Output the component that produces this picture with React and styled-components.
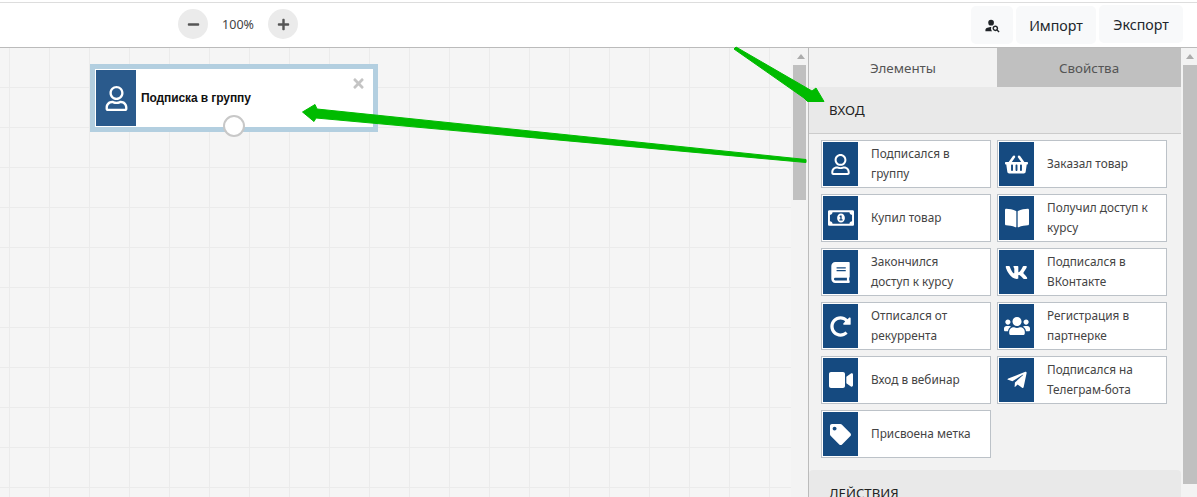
import styled, { createGlobalStyle } from "styled-components";
import {
  FaRegUser,
  FaShoppingBasket,
  FaRegMoneyBillAlt,
  FaBookOpen,
  FaBook,
  FaVk,
  FaRedoAlt,
  FaUsers,
  FaVideo,
  FaTelegramPlane,
  FaTag,
  FaMinus,
  FaPlus,
  FaTimes,
} from "react-icons/fa";
import { MdPersonSearch } from "react-icons/md";

const GlobalStyle = createGlobalStyle`
  html, body {
    margin: 0;
    padding: 0;
    height: 100%;
    overflow: hidden;
    background: #fff;
  }
  * { box-sizing: border-box; }
`;

const Page = styled.div`
  position: relative;
  width: 1197px;
  height: 497px;
  overflow: hidden;
  display: flex;
  flex-direction: column;
  padding-top: 2px;
  font-family: "Noto Sans", "Open Sans", sans-serif;
`;

const Toolbar = styled.header`
  height: 46px;
  flex: none;
  border-top: 1px solid #ddd;
  border-bottom: 1px solid #bbb;
  background: #fff;
  display: flex;
  align-items: flex-start;
  padding: 2px 14px 0 178px;
`;

const Zoom = styled.div`
  display: flex;
  align-items: center;
  margin-top: 4px;
`;

const ZoomButton = styled.div`
  width: 30px;
  height: 30px;
  border-radius: 50%;
  background: #ebebeb;
  color: #555;
  display: flex;
  align-items: center;
  justify-content: center;
  font-size: 13px;
`;

const ZoomValue = styled.span`
  width: 60px;
  text-align: center;
  font-size: 12.5px;
  color: #444;
`;

const Actions = styled.div`
  margin-left: auto;
  display: flex;
  gap: 3px;
`;

const ActionButton = styled.div`
  height: 38px;
  width: ${(p) => p.$width}px;
  margin-top: ${(p) => p.$top || 0}px;
  background: #f8f9fa;
  border-radius: 5px;
  color: #212529;
  font-size: 14.2px;
  display: flex;
  align-items: center;
  justify-content: center;
`;

const Main = styled.main`
  flex: 1;
  min-height: 0;
  display: flex;
`;

const Canvas = styled.section`
  width: 791px;
  flex: none;
  padding: 16px 0 0 90px;
  background-color: #f5f5f5;
  background-image:
    linear-gradient(to right, #ebebeb 1px, transparent 1px),
    linear-gradient(to bottom, #ebebeb 1px, transparent 1px);
  background-size: 40px 40px;
  background-position: 9px 39px;
`;

const Node = styled.div`
  position: relative;
  width: 288px;
  height: 68px;
  border: 5px solid #b3cfe0;
  background: #fff;
  padding: 1px;
  display: flex;
  align-items: center;
`;

const NodeIcon = styled.div`
  width: 40px;
  height: 100%;
  background: #2a5a8c;
  color: #fff;
  display: flex;
  align-items: center;
  justify-content: center;
  font-size: 25px;
`;

const NodeTitle = styled.span`
  margin-left: 5px;
  font-family: "Liberation Sans", Arial, sans-serif;
  font-weight: 700;
  font-size: 12px;
  letter-spacing: -0.1px;
  color: #111;
`;

const NodeClose = styled.div`
  position: absolute;
  top: 7px;
  right: 7px;
  color: #c4c4c4;
  font-size: 15px;
  line-height: 0;
`;

const NodePort = styled.div`
  position: absolute;
  left: 128px;
  bottom: -10px;
  width: 22px;
  height: 22px;
  border-radius: 50%;
  border: 2px solid #c8c8c8;
  background: #fff;
`;

const Scrollbar = styled.div`
  width: ${(p) => p.$width}px;
  flex: none;
  background: #f3f3f3;
  padding: 17px 0 0 2px;
  position: relative;

  &::before {
    content: "";
    position: absolute;
    top: 6px;
    left: ${(p) => p.$width / 2 - 3}px;
    border-left: 4px solid transparent;
    border-right: 4px solid transparent;
    border-bottom: 5px solid #acacac;
  }
`;

const Thumb = styled.div`
  width: ${(p) => p.$width}px;
  height: ${(p) => p.$height}px;
  background: #c0c0c0;
`;

const Sidebar = styled.aside`
  width: 373px;
  flex: none;
  border-left: 1px solid #bbb;
  background: #f2f2f2;
  overflow: hidden;
`;

const Tabs = styled.div`
  display: flex;
  height: 39px;
`;

const Tab = styled.div`
  width: ${(p) => p.$width}px;
  display: flex;
  align-items: center;
  justify-content: center;
  font-size: 13.4px;
  color: #555;
  background: ${(p) => (p.$active ? "#f2f2f2" : "#c0c0c0")};
`;

const SectionHead = styled.div`
  height: ${(p) => (p.$rounded ? "46px" : "47px")};
  background: #e9e9e9;
  border-bottom: 1px solid #ccc;
  border-radius: ${(p) => (p.$rounded ? "4px 4px 0 0" : "0")};
  display: flex;
  align-items: center;
  padding-left: 20px;
  font-size: 13.2px;
  color: #222;
`;

const Items = styled.div`
  display: grid;
  grid-template-columns: 170px 170px;
  grid-auto-rows: 48px;
  column-gap: 6px;
  row-gap: 6px;
  padding: 6px 0 12px 12px;
`;

const Item = styled.div`
  border: 1px solid #bcc2c8;
  background: #fff;
  padding: 1px;
  display: flex;
  align-items: center;
`;

const ItemIcon = styled.div`
  width: 35px;
  height: 100%;
  flex: none;
  background: #154a80;
  color: #fff;
  display: flex;
  align-items: center;
  justify-content: center;
`;

const ItemLabel = styled.span`
  margin: -2px 0 0 13px;
  max-width: 106px;
  font-size: 11.8px;
  line-height: 20px;
  color: #444;
`;

const ArrowLayer = styled.svg`
  position: absolute;
  left: 0;
  top: 0;
  pointer-events: none;
`;

const items = [
  [FaRegUser, "Подписался в группу", 21],
  [FaShoppingBasket, "Заказал товар", 23],
  [FaRegMoneyBillAlt, "Купил товар", 26],
  [FaBookOpen, "Получил доступ к курсу", 24],
  [FaBook, "Закончился доступ к курсу", 21],
  [FaVk, "Подписался в ВКонтакте", 23],
  [FaRedoAlt, "Отписался от рекуррента", 21],
  [FaUsers, "Регистрация в партнерке", 26],
  [FaVideo, "Вход в вебинар", 24],
  [FaTelegramPlane, "Подписался на Телеграм-бота", 22],
  [FaTag, "Присвоена метка", 21],
];

export default function App() {
  return (
    <Page>
      <GlobalStyle />
      <Toolbar>
        <Zoom>
          <ZoomButton><FaMinus /></ZoomButton>
          <ZoomValue>100%</ZoomValue>
          <ZoomButton><FaPlus /></ZoomButton>
        </Zoom>
        <Actions>
          <ActionButton $width={42} $top={1}><MdPersonSearch size={17} /></ActionButton>
          <ActionButton $width={80} $top={1}>Импорт</ActionButton>
          <ActionButton $width={84}>Экспорт</ActionButton>
        </Actions>
      </Toolbar>
      <Main>
        <Canvas>
          <Node>
            <NodeIcon><FaRegUser /></NodeIcon>
            <NodeTitle>Подписка в группу</NodeTitle>
            <NodeClose><FaTimes /></NodeClose>
            <NodePort />
          </Node>
        </Canvas>
        <Scrollbar $width={17}><Thumb $width={13} $height={135} /></Scrollbar>
        <Sidebar>
          <Tabs>
            <Tab $active $width={188}>Элементы</Tab>
            <Tab $width={184}>Свойства</Tab>
          </Tabs>
          <SectionHead>ВХОД</SectionHead>
          <Items>
            {items.map(([Icon, label, size]) => (
              <Item key={label}>
                <ItemIcon><Icon size={size} /></ItemIcon>
                <ItemLabel>{label}</ItemLabel>
              </Item>
            ))}
          </Items>
          <SectionHead $rounded>ДЕЙСТВИЯ</SectionHead>
        </Sidebar>
        <Scrollbar $width={16}><Thumb $width={14} $height={419} /></Scrollbar>
      </Main>
      <ArrowLayer width="1197" height="497" viewBox="0 0 1197 497">
        <g fill="#00bb00" stroke="#00bb00" strokeWidth="1" strokeLinejoin="round">
          <polygon points="734,49 736,47 812,91 816,88 824,101.5 807.5,101.5 804,98" />
          <polygon points="302.5,112 315,104.5 317,109 806,159.5 806,162.5 316,118 314,121.5" />
        </g>
      </ArrowLayer>
    </Page>
  );
}
